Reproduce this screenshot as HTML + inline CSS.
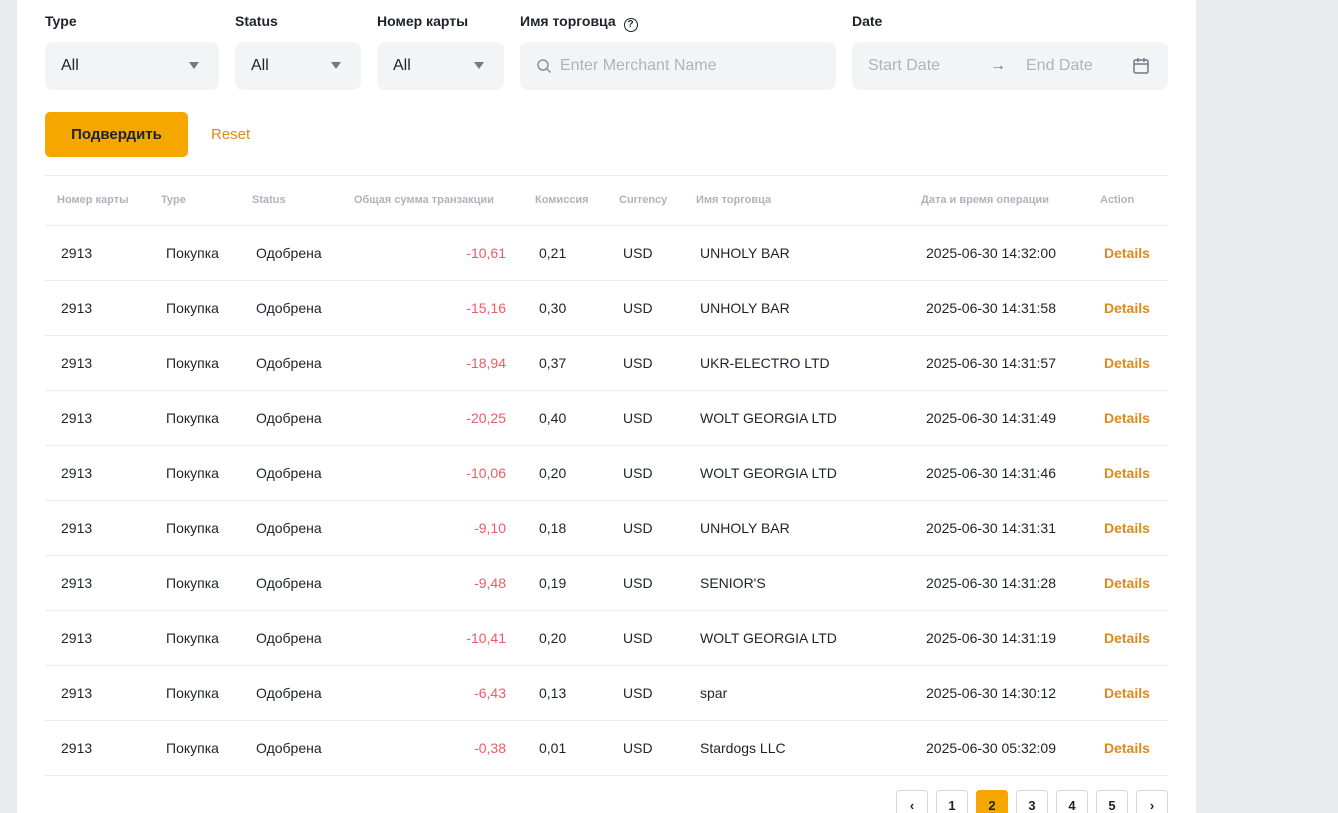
<!DOCTYPE html>
<html style="width:1338px;height:813px;overflow:hidden"><head><meta charset="utf-8"><style>
*{margin:0;padding:0;box-sizing:border-box}
body{width:1338px;height:813px;background:#e9ebef;font-family:"Liberation Sans",sans-serif;position:relative;overflow:hidden;color:#1e2329}
.panel{position:absolute;left:17px;top:0;width:1179px;height:813px;background:#fff}
.abs{position:absolute;white-space:nowrap}
.lbl{font-size:14px;font-weight:bold;top:13px;color:#1e2329}
.box{position:absolute;top:42px;height:48px;background:#f3f4f6;border-radius:8px;font-size:16px;display:flex;align-items:center}
.tri{position:absolute;right:20px;top:20px;width:0;height:0;border-left:5px solid transparent;border-right:5px solid transparent;border-top:7px solid #707a8a}
.ph{color:#aeb4bc}
.hd{font-size:11px;font-weight:bold;color:#aeb4bc;top:194px}
.line{position:absolute;left:45px;width:1123px;height:1px;background:#eaecef}
.row{position:absolute;left:0;width:1338px;height:55px;font-size:14px}
.row span{position:absolute;top:20px;white-space:nowrap}
.amt{color:#ef5a67;text-align:right;width:100px}
.det{color:#e0891b;font-weight:bold}
.pg{position:absolute;top:790px;width:32px;height:30px;border:1px solid #d5d8dc;border-radius:4px;font-size:13px;font-weight:bold;text-align:center;line-height:30px;background:#fff}
</style></head><body>
<div class="panel"></div>
<div class="abs lbl" style="left:45px">Type</div>
<div class="abs lbl" style="left:235px">Status</div>
<div class="abs lbl" style="left:377px">Номер карты</div>
<div class="abs lbl" style="left:520px">Имя торговца <span style="display:inline-block;width:14px;height:14px;border:1.5px solid #1e2329;border-radius:50%;font-size:10px;text-align:center;line-height:11px;vertical-align:-1px;margin-left:4px">?</span></div>
<div class="abs lbl" style="left:852px">Date</div>
<div class="box" style="left:45px;width:174px;padding-left:16px">All<div class="tri"></div></div>
<div class="box" style="left:235px;width:126px;padding-left:16px">All<div class="tri"></div></div>
<div class="box" style="left:377px;width:127px;padding-left:16px">All<div class="tri"></div></div>
<div class="box ph" style="left:520px;width:316px;padding-left:16px"><svg width="16" height="16" viewBox="0 0 16 16" style="margin-right:8px"><circle cx="7" cy="7" r="5" fill="none" stroke="#8a919a" stroke-width="1.5"/><path d="M11 11l3.5 3.5" stroke="#8a919a" stroke-width="1.5"/></svg>Enter Merchant Name</div>
<div class="box ph" style="left:852px;width:316px;padding-left:16px">Start Date<span style="position:absolute;left:138px;color:#707a8a">→</span><span style="position:absolute;left:174px">End Date</span>
<svg style="position:absolute;right:18px;top:15px" width="18" height="18" viewBox="0 0 18 18"><rect x="2" y="3" width="14" height="13" rx="1.5" fill="none" stroke="#707a8a" stroke-width="1.5"/><path d="M2 7h14M6 1v4M12 1v4" stroke="#707a8a" stroke-width="1.5"/></svg></div>
<div class="abs" style="left:45px;top:112px;width:143px;height:45px;background:#f5a700;border-radius:5px;font-size:15px;font-weight:bold;text-align:center;line-height:45px">Подвердить</div>
<div class="abs" style="left:211px;top:126px;font-size:15px;color:#e0891b">Reset</div>
<div class="line" style="top:175px"></div>
<div class="abs hd" style="left:57px">Номер карты</div>
<div class="abs hd" style="left:161px">Type</div>
<div class="abs hd" style="left:252px">Status</div>
<div class="abs hd" style="left:354px">Общая сумма транзакции</div>
<div class="abs hd" style="left:535px">Комиссия</div>
<div class="abs hd" style="left:619px">Currency</div>
<div class="abs hd" style="left:696px">Имя торговца</div>
<div class="abs hd" style="left:921px">Дата и время операции</div>
<div class="abs hd" style="left:1100px">Action</div>
<div class="line" style="top:225px"></div>
<div id="rows"></div>
<script>
var d=[["-10,61","0,21","UNHOLY BAR","14:32:00"],["-15,16","0,30","UNHOLY BAR","14:31:58"],["-18,94","0,37","UKR-ELECTRO LTD","14:31:57"],["-20,25","0,40","WOLT GEORGIA LTD","14:31:49"],["-10,06","0,20","WOLT GEORGIA LTD","14:31:46"],["-9,10","0,18","UNHOLY BAR","14:31:31"],["-9,48","0,19","SENIOR'S","14:31:28"],["-10,41","0,20","WOLT GEORGIA LTD","14:31:19"],["-6,43","0,13","spar","14:30:12"],["-0,38","0,01","Stardogs LLC","05:32:09"]];
var h="";d.forEach(function(r,i){var t=225+i*55;h+='<div class="row" style="top:'+t+'px"><span style="left:61px">2913</span><span style="left:166px">Покупка</span><span style="left:256px">Одобрена</span><span class="amt" style="left:406px">'+r[0]+'</span><span style="left:539px">'+r[1]+'</span><span style="left:623px">USD</span><span style="left:700px">'+r[2]+'</span><span style="left:926px">2025-06-30 '+r[3]+'</span><span class="det" style="left:1104px">Details</span></div><div class="line" style="top:'+(t+55)+'px"></div>';});
document.getElementById("rows").innerHTML=h;
</script>
<div class="pg" style="left:896px">‹</div>
<div class="pg" style="left:936px">1</div>
<div class="pg" style="left:976px;background:#f5a700;border-color:#f5a700">2</div>
<div class="pg" style="left:1016px">3</div>
<div class="pg" style="left:1056px">4</div>
<div class="pg" style="left:1096px">5</div>
<div class="pg" style="left:1136px">›</div>
</body></html>
